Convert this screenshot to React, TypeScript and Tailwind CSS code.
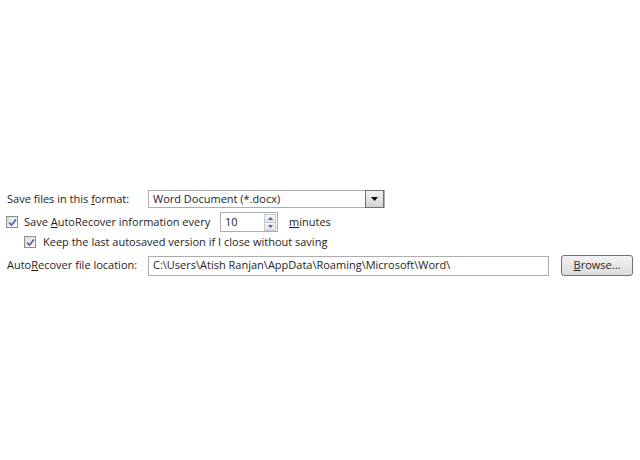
import React from "react";

function Check({ className = "" }: { className?: string }) {
  return (
    <span
      className={`flex h-[12px] w-[12px] shrink-0 items-center justify-center border border-[#8e8f8f] bg-gradient-to-br from-[#dcdcdc] to-[#fbfbfb] ${className}`}
    >
      <svg width="9" height="9" viewBox="0 0 9 9">
        <path d="M1 4.5 L3.5 7 L8 1.5" fill="none" stroke="#4a5f97" strokeWidth="1.6" />
      </svg>
    </span>
  );
}

export default function App() {
  return (
    <div
      className="h-[460px] w-[640px] whitespace-nowrap bg-white text-[11px] text-[#1e1e1e]"
      style={{ fontFamily: '"Open Sans", "Noto Sans", sans-serif' }}
    >
      <div className="flex flex-col pt-[190px]">
        {/* format row */}
        <div className="flex h-[18px] items-center">
          <span className="w-[148px] shrink-0 pl-[7px]">
            Save files in this <u>f</u>ormat:
          </span>
          <div className="flex h-[18px] w-[237px] items-center border border-[#abadb3] bg-white">
            <span className="flex-1 pl-[4px]">Word Document (*.docx)</span>
            <span className="flex h-[18px] w-[19px] items-center justify-center border border-[#707070] bg-gradient-to-b from-[#f2f2f2] to-[#d4d4d4]">
              <svg width="7" height="4" viewBox="0 0 7 4">
                <path d="M0 0 H7 L3.5 4 Z" fill="#000" />
              </svg>
            </span>
          </div>
        </div>

        {/* autorecover row */}
        <div className="mt-[4px] flex h-[20px] items-center">
          <Check className="ml-[6px]" />
          <span className="ml-[6px] w-[196px] shrink-0">
            Save <u>A</u>utoRecover information every
          </span>
          <div className="flex h-[20px] w-[58px] items-center border border-[#abadb3] bg-white">
            <span className="flex-1 pl-[4px]">10</span>
            <span className="mr-[1px] flex h-[17px] w-[12px] flex-col border border-[#c4c9d2]">
              <span className="flex flex-1 items-center justify-center border-b border-[#c4c9d2] bg-gradient-to-b from-[#f5f6f8] to-[#dfe3ea]">
                <svg width="5" height="3" viewBox="0 0 5 3">
                  <path d="M0 3 H5 L2.5 0 Z" fill="#4a5f97" />
                </svg>
              </span>
              <span className="flex flex-1 items-center justify-center bg-gradient-to-b from-[#f5f6f8] to-[#dfe3ea]">
                <svg width="5" height="3" viewBox="0 0 5 3">
                  <path d="M0 0 H5 L2.5 3 Z" fill="#4a5f97" />
                </svg>
              </span>
            </span>
          </div>
          <span className="ml-[11px]">
            <u>m</u>inutes
          </span>
        </div>

        {/* keep last row */}
        <div className="mt-[4px] flex h-[12px] items-center">
          <Check className="ml-[24px]" />
          <span className="ml-[7px]">Keep the last autosaved version if I close without saving</span>
        </div>

        {/* location row */}
        <div className="mt-[7px] flex h-[21px] items-center">
          <span className="w-[148px] shrink-0 pl-[7px]">
            Auto<u>R</u>ecover file location:
          </span>
          <div className="flex h-[20px] w-[401px] items-center border border-[#abadb3] bg-white pl-[4px]">
            C:\Users\Atish Ranjan\AppData\Roaming\Microsoft\Word\
          </div>
          <button className="ml-[12px] flex h-[21px] w-[72px] items-center justify-center rounded-[3px] border border-[#707070] bg-gradient-to-b from-[#f2f2f2] to-[#dddddd]">
            <u>B</u>rowse...
          </button>
        </div>
      </div>
    </div>
  );
}
